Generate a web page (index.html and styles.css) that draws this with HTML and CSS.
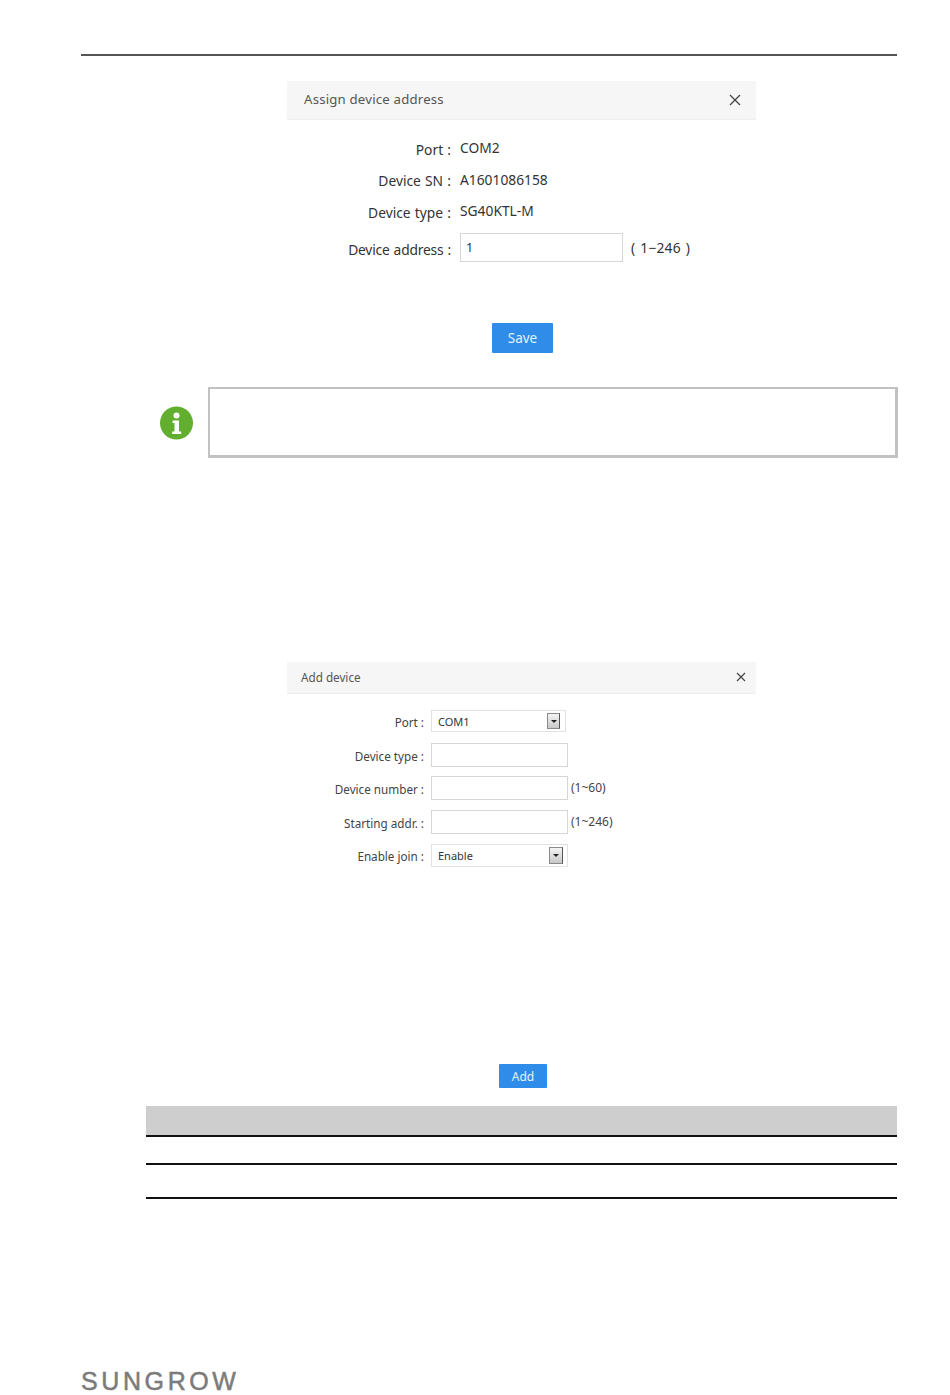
FILE: index.html
```html
<!DOCTYPE html>
<html lang="en">
<head>
<meta charset="utf-8">
<title>Device address</title>
<link rel="stylesheet" href="styles.css">
</head>
<body>
<div class="page">
  <div class="top-rule"></div>

  <section class="dialog dialog-assign">
    <header class="dialog-head">
      <span>Assign device address</span>
      <svg class="close" width="12" height="12" viewBox="0 0 12 12"><path d="M1 1l10 10M11 1L1 11" stroke="#444" stroke-width="1.3" fill="none"/></svg>
    </header>
    <div class="assign-form">
      <div class="assign-row row-port"><span class="label">Port :</span><span class="value">COM2</span></div>
      <div class="assign-row row-sn"><span class="label">Device SN :</span><span class="value">A1601086158</span></div>
      <div class="assign-row row-type"><span class="label">Device type :</span><span class="value">SG40KTL-M</span></div>
      <div class="assign-row row-addr"><span class="label">Device address :</span><span class="field field-assign">1</span><span class="hint-assign">( 1−246 )</span></div>
    </div>
    <div class="actions"><button class="btn btn-save">Save</button></div>
  </section>

  <section class="note">
    <svg class="note-icon" width="34" height="34" viewBox="0 0 34 34">
      <circle cx="16.5" cy="17" r="16.5" fill="#62ae2f"/>
      <circle cx="16.5" cy="9.5" r="3" fill="#fff"/>
      <path d="M12.5 14.5h6.500v11h2.200V28h-9v-2.500h2.300v-8.500h-2z" fill="#fff"/>
    </svg>
    <div class="note-box"></div>
  </section>

  <section class="dialog dialog-add">
    <header class="dialog-head">
      <span>Add device</span>
      <svg class="close" width="10" height="10" viewBox="0 0 10 10"><path d="M1 1l8 8M9 1L1 9" stroke="#444" stroke-width="1.2" fill="none"/></svg>
    </header>
    <div class="add-form">
      <div class="add-row row-a1"><span class="label-add">Port :</span>
        <span class="field field-select field-short"><span>COM1</span><span class="arrow"></span></span></div>
      <div class="add-row row-a2"><span class="label-add">Device type :</span><span class="field field-add"></span></div>
      <div class="add-row row-a3"><span class="label-add">Device number :</span><span class="field field-add"></span><span class="hint-add">(1~60)</span></div>
      <div class="add-row row-a4"><span class="label-add">Starting addr. :</span><span class="field field-add"></span><span class="hint-add">(1~246)</span></div>
      <div class="add-row row-a5"><span class="label-add">Enable join :</span>
        <span class="field field-select field-enable"><span>Enable</span><span class="arrow arrow-wide"></span></span></div>
    </div>
    <div class="actions actions-add"><button class="btn btn-add">Add</button></div>
  </section>

  <div class="table">
    <div class="table-head"></div>
    <div class="table-row row-one"></div>
    <div class="table-row row-two"></div>
  </div>

  <footer class="footer"><span class="logo">SUNGROW</span></footer>
</div>
</body>
</html>
```
FILE: styles.css
```css
* { box-sizing: border-box; }
html, body { margin: 0; padding: 0; background: #fff; }
body { font-family: "Noto Sans", "Open Sans", sans-serif; color: #333; }
.page { width: 950px; height: 1395px; overflow: hidden; padding-top: 54px; display: flex; flex-direction: column; }
.top-rule { margin-left: 81px; width: 816px; height: 2px; background: #555; flex: none; }

.dialog { margin-left: 287px; width: 469px; flex: none; }
.dialog-assign { margin-top: 25px; }
.dialog-add { margin-top: 204px; }
.dialog-head { display: flex; align-items: center; justify-content: space-between; background: #f6f6f6; border-bottom: 1px solid #efefef; }
.dialog-assign .dialog-head { height: 39px; padding: 0 15px 0 17px; font-size: 13.2px; color: #555; letter-spacing: 0.2px; }
.dialog-assign .dialog-head span { position: relative; top: -1px; }
.dialog-add .dialog-head { height: 32px; padding: 0 10px 2px 14px; font-size: 11.7px; color: #555; }

.assign-form { padding-top: 11px; }
.assign-row { display: flex; align-items: center; font-size: 14px; color: #333; }
.label { width: 164px; margin-right: 9px; text-align: right; font-size: 13.8px; flex: none; padding-top: 4px; word-spacing: 0.6px; }
.value { font-size: 13.8px; color: #333; }
.row-port { height: 32px; }
.row-sn { height: 31px; margin-top: 1px; }
.row-sn .label { padding-top: 2px; }
.row-type { height: 32px; margin-top: -1px; }
.row-addr { height: 29px; margin-top: 7px; }
.row-addr .label { padding-top: 4px; letter-spacing: -0.18px; }
.field { display: block; background: #fff; border: 1px solid #d6d6d6; flex: none; }
.field-assign { width: 163px; height: 29px; line-height: 27px; padding-left: 5px; font-size: 12.5px; }
.hint-assign { margin-left: 8px; font-size: 13.8px; word-spacing: 1.2px; letter-spacing: 0.2px; }
.actions { display: flex; justify-content: center; margin-top: 61px; padding-left: 2px; }
.btn { display: block; border: 0; border-radius: 1px; background: #2f8ce9; color: #e6f1fc; font-family: inherit; padding: 0; }
.btn-save { width: 61px; height: 30px; font-size: 13.5px; }
.btn-add { width: 48px; height: 24px; font-size: 12px; }
.actions-add { margin-top: 197px; padding-left: 3px; }

.note { display: flex; align-items: center; margin: 34px 0 0 160px; width: 738px; flex: none; }
.note-icon { flex: none; margin-right: 14px; }
.note-box { width: 691px; height: 71px; border: 3px solid #c2c2c2; border-top-width: 2px; border-left-width: 2px; }

.add-form { padding-top: 16px; }
.add-row { display: flex; align-items: center; font-size: 11.7px; color: #444; }
.label-add { width: 137px; margin-right: 7px; text-align: right; flex: none; padding-top: 1px; }
.row-a1 { height: 22px; }
.row-a2 { height: 24px; margin-top: 11px; }
.row-a3 { height: 24px; margin-top: 9px; }
.row-a4 { height: 24px; margin-top: 10px; }
.row-a5 { height: 23px; margin-top: 10px; }
.field-add { width: 137px; height: 100%; }
.field-select { display: flex; align-items: center; justify-content: space-between; height: 100%; padding-left: 6px; font-size: 11px; border-color: #e2e2e2; color: #333; }
.field-short { width: 135px; padding-right: 5px; }
.field-enable { width: 137px; padding-right: 4px; }
.hint-add { margin-left: 3px; font-size: 12px; padding-bottom: 1px; }
.arrow { position: relative; width: 13px; height: 16px; border: 1px solid #8a8a8a; border-right-color: #555; background: linear-gradient(#f4f4f4, #c8c8c8); }
.arrow-wide { width: 14px; height: 17px; }
.arrow::after { content: ""; position: absolute; left: 3px; top: 6px; border: 3px solid transparent; border-top-color: #222; border-bottom: 0; }

.table { margin: 18px 0 0 146px; width: 751px; flex: none; }
.table-head { height: 31px; background: #cecece; border-bottom: 2px solid #111; }
.table-row { border-bottom: 2px solid #111; }
.row-one { height: 28px; }
.row-two { height: 34px; }

.footer { margin: 172px 0 0 81px; flex: none; }
.logo { display: block; font-family: "Liberation Sans", sans-serif; font-size: 25px; line-height: 20px; letter-spacing: 3.6px; color: #7b7b7b; -webkit-text-stroke: 0.5px #7b7b7b; }
```
